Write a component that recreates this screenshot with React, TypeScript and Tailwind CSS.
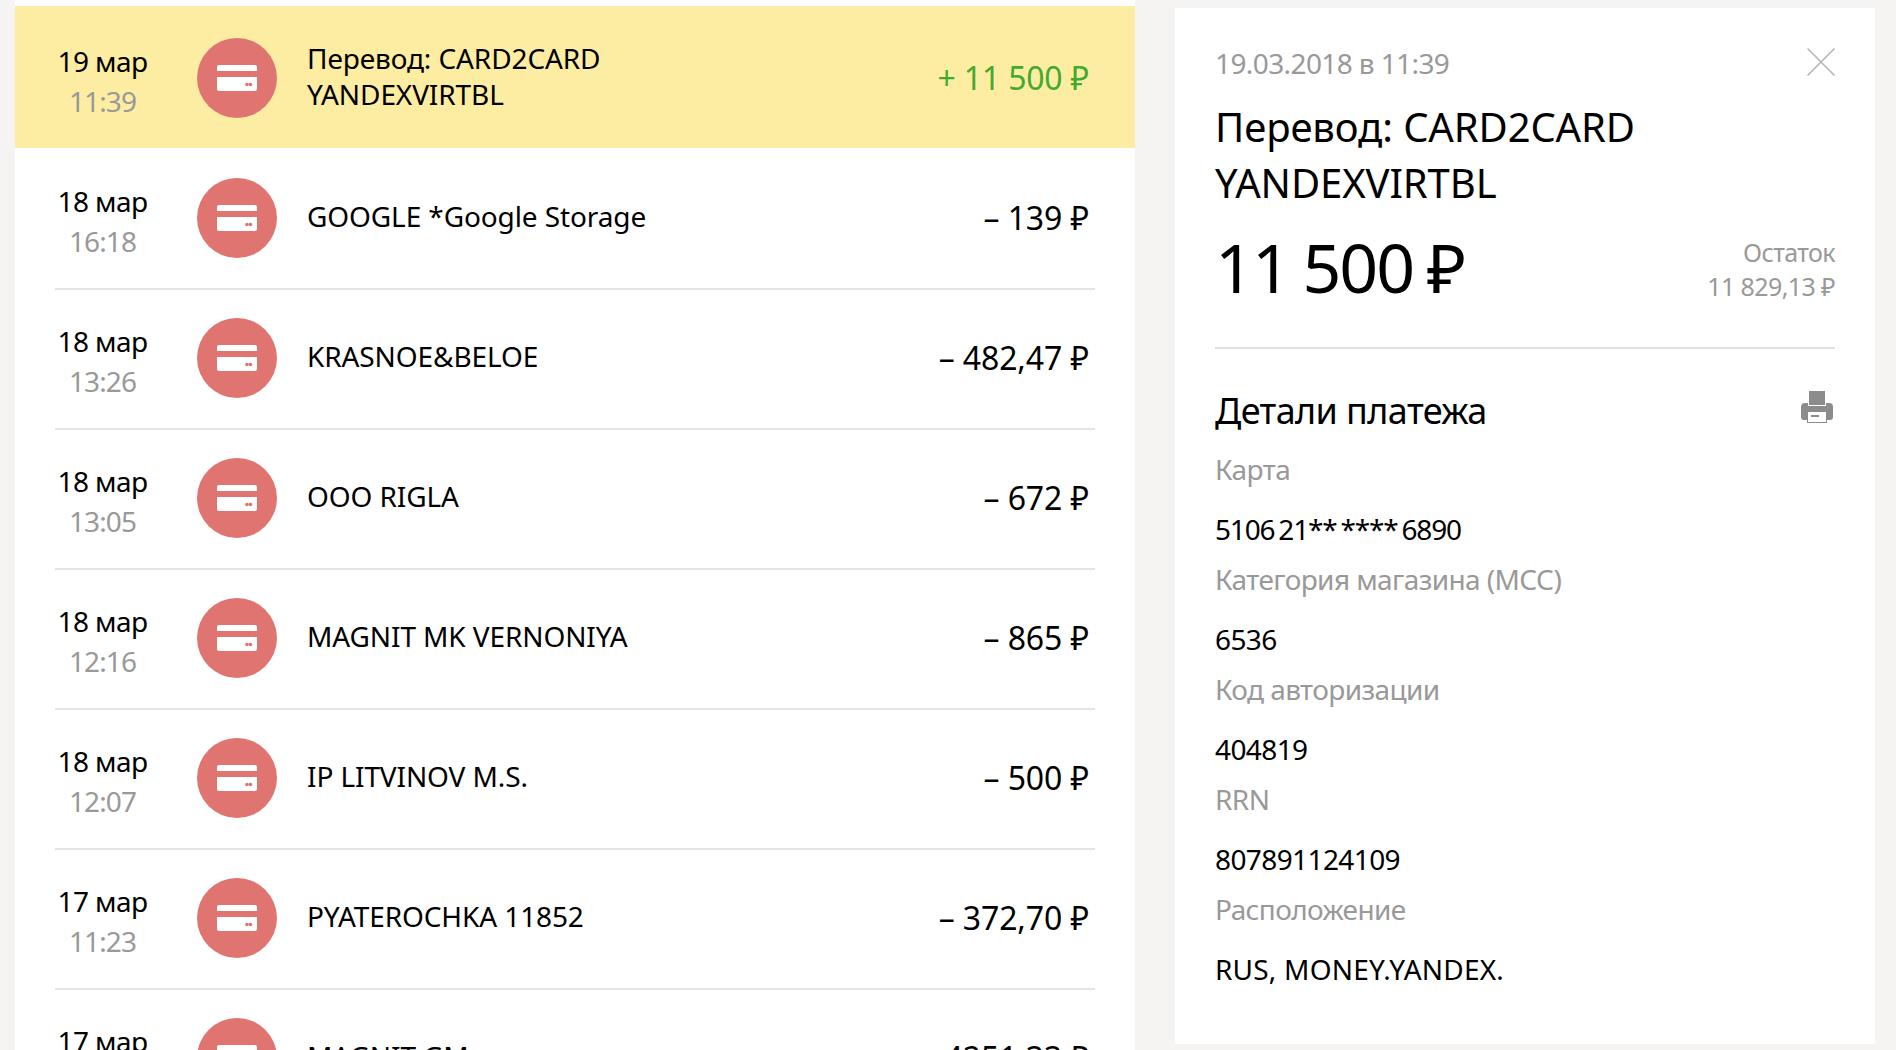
const rows = [
  { date: "19 мар", time: "11:39", name: ["Перевод: CARD2CARD", "YANDEXVIRTBL"], sum: "+ 11 500 ₽", active: true },
  { date: "18 мар", time: "16:18", name: ["GOOGLE *Google Storage"], sum: "– 139 ₽" },
  { date: "18 мар", time: "13:26", name: ["KRASNOE&BELOE"], sum: "– 482,47 ₽" },
  { date: "18 мар", time: "13:05", name: ["OOO RIGLA"], sum: "– 672 ₽" },
  { date: "18 мар", time: "12:16", name: ["MAGNIT MK VERNONIYA"], sum: "– 865 ₽" },
  { date: "18 мар", time: "12:07", name: ["IP LITVINOV M.S."], sum: "– 500 ₽" },
  { date: "17 мар", time: "11:23", name: ["PYATEROCHKA 11852"], sum: "– 372,70 ₽" },
  { date: "17 мар", time: "10:48", name: ["MAGNIT GM"], sum: "– 4251,33 ₽" },
]

const details = [
  { label: "Карта", value: "5106 21** **** 6890", cls: "tracking-[-1.2px] [word-spacing:-2px]" },
  { label: "Категория магазина (МСС)", value: "6536", cls: "" },
  { label: "Код авторизации", value: "404819", cls: "" },
  { label: "RRN", value: "807891124109", cls: "" },
  { label: "Расположение", value: "RUS, MONEY.YANDEX.", cls: "tracking-[0.2px]" },
]

const CardIcon = () => (
  <svg width="40" height="26" viewBox="0 0 40 26" fill="none">
    <path d="M2 0h36a2 2 0 0 1 2 2v4H0V2a2 2 0 0 1 2-2z" fill="#fff" />
    <path d="M0 12h40v12a2 2 0 0 1-2 2H2a2 2 0 0 1-2-2z" fill="#fff" />
    <circle cx="30" cy="19.5" r="1.8" fill="#df7470" />
    <circle cx="33.5" cy="19.5" r="1.8" fill="#df7470" />
  </svg>
)

const PrintIcon = () => (
  <svg width="32" height="32" viewBox="0 0 32 32" fill="#8c8c8c">
    <rect x="8" y="0" width="16" height="14" />
    <path d="M4 12h3v3h18v-3h3a4 4 0 0 1 4 4v10a3 3 0 0 1-3 3H3a3 3 0 0 1-3-3V16a4 4 0 0 1 4-4z" />
    <rect x="6.5" y="20.5" width="19" height="11" fill="#fff" stroke="#8c8c8c" />
    <rect x="10" y="24" width="8" height="2" />
  </svg>
)

const CloseIcon = () => (
  <svg width="28" height="28" viewBox="0 0 28 28" stroke="#b3b3b3" strokeWidth="1.5" fill="none">
    <path d="M0.5 0.5l27 27M27.5 0.5l-27 27" />
  </svg>
)

export default function App() {
  return (
    <div className="flex h-[1050px] overflow-hidden bg-[#f5f4f2] pl-[15px] font-['Noto_Sans',sans-serif] text-[28px] leading-[36px] tracking-[-0.6px] text-black">
      <div className="w-[1120px] shrink-0 bg-white pt-[6px]">
        {rows.map((r, i) => (
          <div key={i}>
            <div className={r.active ? "flex h-[142px] items-center bg-[#fdeda3] pl-[40px] pr-[46px] pt-[2px]" : "flex h-[140px] items-center pl-[40px] pr-[46px]"}>
              <div className="flex w-[95px] shrink-0 flex-col items-center pt-[5px]">
                <span>{r.date}</span>
                <span className="mt-[4px] tracking-[-0.9px] text-[#999]">{r.time}</span>
              </div>
              <div className="ml-[47px] flex h-[80px] w-[80px] shrink-0 items-center justify-center rounded-full bg-[#df7470]">
                <CardIcon />
              </div>
              <div className="ml-[30px] flex-1 pb-[5px] tracking-[-0.1px]">
                {r.name.map((n) => (
                  <div key={n}>{n}</div>
                ))}
              </div>
              <div className={r.active ? "text-[32px] tracking-[-0.2px] text-[#45a92f]" : "text-[32px] tracking-[-0.1px]"}>{r.sum}</div>
            </div>
            {!r.active && <div className="mx-[40px] -mb-[2px] h-[2px] bg-[#e5e5e5]" />}
          </div>
        ))}
      </div>

      <div className="ml-[40px] mt-[8px] flex h-[1036px] w-[700px] shrink-0 flex-col bg-white px-[40px] pt-[37px]">
        <div className="flex items-start justify-between">
          <span className="text-[#999]">19.03.2018 в 11:39</span>
          <div className="mt-[3px]">
            <CloseIcon />
          </div>
        </div>
        <div className="mt-[18px] text-[40px] leading-[56px] tracking-[-0.1px]">
          <div>Перевод: CARD2CARD</div>
          <div>YANDEXVIRTBL</div>
        </div>
        <div className="mt-[16px] flex items-center justify-between border-b-2 border-[#e2dfdf] pb-[40px]">
          <span className="text-[68px] leading-[80px] tracking-[-2px] [word-spacing:-2px]">11 500 ₽</span>
          <div className="pt-[4px] text-right text-[25px] leading-[34px] text-[#999]">
            <div>Остаток</div>
            <div>11 829,13 ₽</div>
          </div>
        </div>
        <div className="mt-[39px] flex items-center justify-between">
          <span className="text-[36px] leading-[46px]">Детали платежа</span>
          <div className="mb-[8px] mr-[2px] h-[32px]">
            <PrintIcon />
          </div>
        </div>
        <div className="mt-[17px] flex flex-col">
          {details.map((d) => (
            <div key={d.label} className="flex h-[110px] flex-col">
              <span className="text-[#999]">{d.label}</span>
              <span className={"mt-[24px] " + d.cls}>{d.value}</span>
            </div>
          ))}
        </div>
      </div>
    </div>
  )
}
